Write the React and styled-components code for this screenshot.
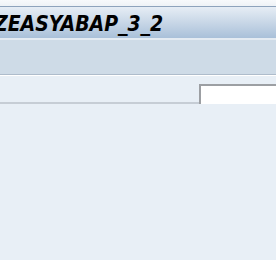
import React from "react";
import styled, { createGlobalStyle } from "styled-components";

const Global = createGlobalStyle`
  html, body { margin: 0; padding: 0; background: #e8eff6; overflow: hidden; }
  body { width: 276px; height: 260px; }
`;

const Page = styled.div`
  width: 276px;
  height: 260px;
  display: flex;
  flex-direction: column;
  background: #e8eff6;
  overflow: hidden;
`;

const TopStrip = styled.div`
  height: 6px;
  background: linear-gradient(#f7f9fb, #eef2f6);
  border-bottom: 1px solid #8ea3bc;
`;

const TitleBar = styled.div`
  height: 31px;
  background: linear-gradient(#e6edf5 0%, #cbd9e8 45%, #a9c0d9 100%);
  border-bottom: 2px solid #e4ebf2;
  display: flex;
  align-items: center;
  overflow: hidden;
`;

const Title = styled.h1`
  margin: 0 0 0 -6px;
  font-family: "DejaVu Sans Condensed", "DejaVu Sans", sans-serif;
  font-stretch: condensed;
  font-weight: bold;
  font-style: italic;
  font-size: 21px;
  line-height: 24px;
  letter-spacing: 0;
  color: #000;
  white-space: nowrap;
  padding-top: 3px;
`;

const Toolbar = styled.div`
  height: 34px;
  background: #cedbe7;
  border-bottom: 1px solid #aebccb;
  box-shadow: 0 1px 0 #ffffff;
`;

const FieldRow = styled.div`
  margin-top: 1px;
  height: 26px;
  display: flex;
  justify-content: flex-end;
  align-items: flex-end;
  border-bottom: 2px solid #c6cdd5;
  background: #e8eff6;
`;

const Input = styled.div`
  width: 75px;
  height: 18px;
  background: #ffffff;
  border-top: 2px solid #9c9fa3;
  border-left: 2px solid #9c9fa3;
  margin-bottom: -2px;
`;

const Body = styled.div`
  flex: 1;
  background: #e8eff6;
`;

export default function App() {
  return (
    <>
      <Global />
      <Page>
        <TopStrip />
        <TitleBar>
          <Title>ZEASYABAP_3_2</Title>
        </TitleBar>
        <Toolbar />
        <FieldRow>
          <Input />
        </FieldRow>
        <Body />
      </Page>
    </>
  );
}
